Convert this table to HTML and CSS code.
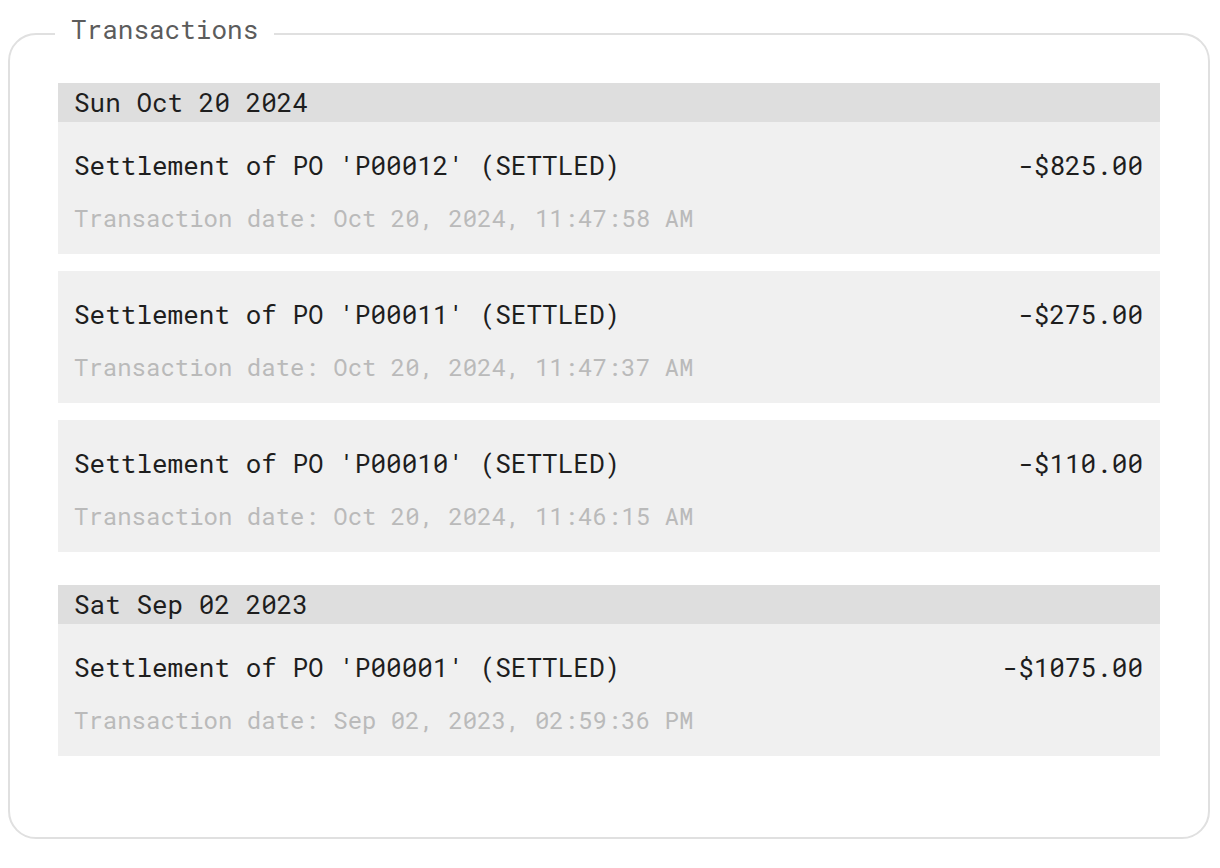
FILE: index.html
```html
<!DOCTYPE html>
<html lang="en">
<head>
<meta charset="utf-8">
<title>Transactions</title>
<link rel="stylesheet" href="styles.css">
</head>
<body>
<fieldset class="panel">
  <legend class="panel-title">Transactions</legend>

  <section class="day">
    <div class="day-header">Sun Oct 20 2024</div>
    <div class="tx">
      <div class="tx-row">
        <span class="tx-desc">Settlement of PO 'P00012' (SETTLED)</span>
        <span class="tx-amount">-$825.00</span>
      </div>
      <div class="tx-date">Transaction date: Oct 20, 2024, 11:47:58 AM</div>
    </div>
    <div class="tx">
      <div class="tx-row">
        <span class="tx-desc">Settlement of PO 'P00011' (SETTLED)</span>
        <span class="tx-amount">-$275.00</span>
      </div>
      <div class="tx-date">Transaction date: Oct 20, 2024, 11:47:37 AM</div>
    </div>
    <div class="tx">
      <div class="tx-row">
        <span class="tx-desc">Settlement of PO 'P00010' (SETTLED)</span>
        <span class="tx-amount">-$110.00</span>
      </div>
      <div class="tx-date">Transaction date: Oct 20, 2024, 11:46:15 AM</div>
    </div>
  </section>

  <section class="day">
    <div class="day-header">Sat Sep 02 2023</div>
    <div class="tx">
      <div class="tx-row">
        <span class="tx-desc">Settlement of PO 'P00001' (SETTLED)</span>
        <span class="tx-amount">-$1075.00</span>
      </div>
      <div class="tx-date">Transaction date: Sep 02, 2023, 02:59:36 PM</div>
    </div>
  </section>
</fieldset>
</body>
</html>
```

FILE: styles.css
```css
html, body {
  background: #ffffff;
}

body {
  margin: 8px;
  font-family: "Roboto Mono", "DejaVu Sans Mono", "Liberation Mono", monospace;
  color: #222222;
}

.panel {
  margin: 0 2px 0 0;
  padding: 0 48px 81px 48px;
  border: 2px solid #e0e0e0;
  border-radius: 28px;
  min-width: 0;
}

.panel-title {
  margin-left: -3px;
  padding: 0 16px 10px;
  font-size: 26px;
  line-height: 42px;
  color: #5c5c5c;
}

.day {
  display: flex;
  flex-direction: column;
  gap: 17px;
  margin-top: 33px;
}

.day:first-of-type {
  margin-top: 23px;
}

.day-header {
  height: 39px;
  line-height: 39px;
  padding: 0 16px;
  margin-bottom: -17px;
  background: #dedede;
  font-size: 26px;
  color: #1e1e1e;
}

.tx {
  background: #f0f0f0;
  padding: 23px 17px 20px 16px;
}

.tx-row {
  display: flex;
  justify-content: space-between;
  align-items: center;
  height: 40px;
  line-height: 40px;
  font-size: 26px;
  color: #1e1e1e;
}

.tx-date {
  margin-top: 17px;
  height: 32px;
  line-height: 32px;
  font-size: 24px;
  color: #bababa;
}
```
